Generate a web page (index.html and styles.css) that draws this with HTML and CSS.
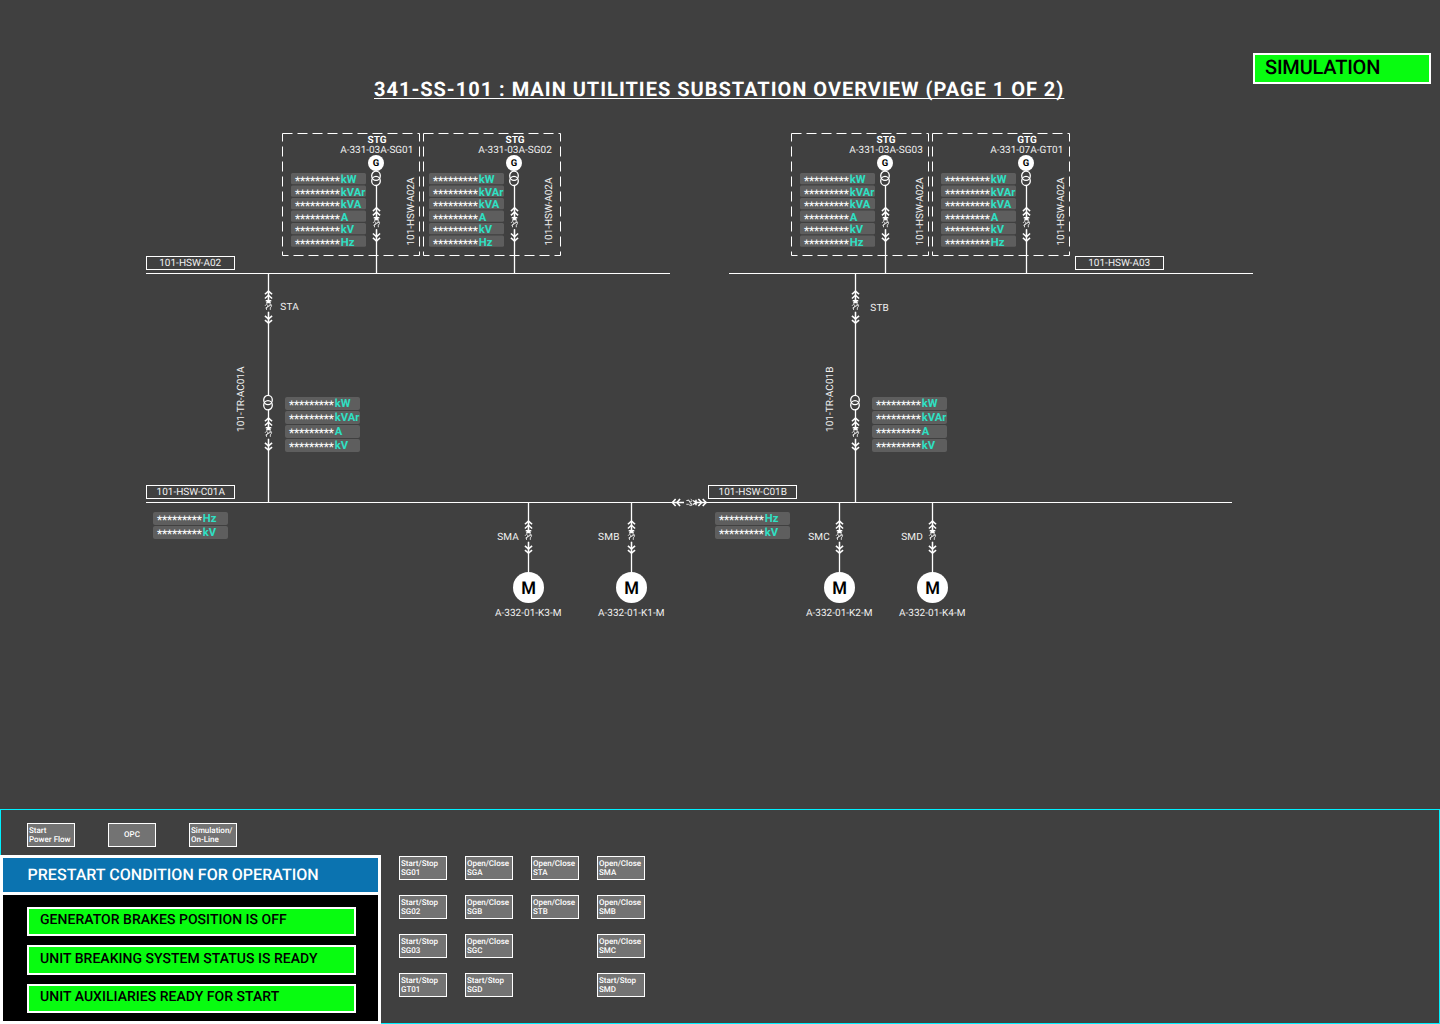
FILE: index.html
```html
<!DOCTYPE html>
<html lang="en">
<head>
<meta charset="utf-8">
<title>341-SS-101 : Main Utilities Substation Overview</title>
<link rel="stylesheet" href="styles.css">
</head>
<body>
<header class="header">
  <h1 class="title">341-SS-101 : MAIN UTILITIES SUBSTATION OVERVIEW (PAGE 1 OF 2)</h1>
  <div class="mode">SIMULATION</div>
</header>

<svg class="diagram" viewBox="0 120 1440 689" width="1440" height="689">
  <defs>
    <!-- withdrawable breaker, origin at the upper tip -->
    <g id="breaker">
      <path class="mask" d="M0 12.5V21"/>
      <path class="chev" d="M-3.6 3.6L0 .4L3.6 3.6M-3.6 7.8L0 4.6L3.6 7.8M-3.6 25.2L0 28.2L3.6 25.2M-3.6 29.4L0 32.4L3.6 29.4"/>
      <path class="spark" d="M0 8.6V11M-2.8 10L2.8 10M-2 12.8L0 10L2 12.8"/>
      <path class="squiggle" d="M-3.3 15C-2.8 13.2 -.3 13.5 -.8 15.5L-2 17.2V19.2M.5 15C1 13.2 3.5 13.5 3 15.5L1.8 17.2V19.2M-3 17.4L3 14"/>
      <path class="wire" d="M0 0V11M0 21.4V33"/>
    </g>
    <g id="transformer">
      <ellipse class="coil" cx="0" cy="-2.6" rx="4.3" ry="4.6"/>
      <ellipse class="coil" cx="0" cy="2.6" rx="4.3" ry="4.6"/>
    </g>
    <g id="stars">
      <text class="star" textLength="45">*********</text>
    </g>
    <g id="gen">
      <path class="wire" d="M.5 66V153"/>
      <circle class="node" cx="0" cy="43" r="8"/>
      <text class="g" x="0" y="46.4">G</text>
      <use href="#transformer" y="58.3"/>
      <use href="#breaker" transform="translate(.5 87.3) scale(1 1.04)"/>
      <g transform="translate(-85 53)">
        <rect class="cell" width="75" height="11.3" rx="1.5"/>
        <rect class="cell" y="12.5" width="75" height="11.3" rx="1.5"/>
        <rect class="cell" y="25" width="75" height="11.3" rx="1.5"/>
        <rect class="cell" y="37.5" width="75" height="11.3" rx="1.5"/>
        <rect class="cell" y="50" width="75" height="11.3" rx="1.5"/>
        <rect class="cell" y="62.5" width="75" height="11.3" rx="1.5"/>
        <use href="#stars" x="4" y="12"/><text class="unit" x="49.8" y="10">kW</text>
        <use href="#stars" x="4" y="24.5"/><text class="unit" x="49.8" y="22.5">kVAr</text>
        <use href="#stars" x="4" y="37"/><text class="unit" x="49.8" y="35">kVA</text>
        <use href="#stars" x="4" y="49.5"/><text class="unit" x="49.8" y="47.5">A</text>
        <use href="#stars" x="4" y="62"/><text class="unit" x="49.8" y="60">kV</text>
        <use href="#stars" x="4" y="74.5"/><text class="unit" x="49.8" y="72.5">Hz</text>
      </g>
      <text class="tag" transform="translate(38.3 125.5) rotate(-90)" textLength="68">101-HSW-A02A</text>
    </g>
    <g id="feeder">
      <path class="wire" d="M.5 274V395M.5 409V502"/>
      <use href="#breaker" x=".5" y="290.7"/>
      <use href="#transformer" y="402.6"/>
      <use href="#breaker" x=".5" y="417.7"/>
      <g transform="translate(17 397)">
        <rect class="cell" width="75" height="13" rx="2"/>
        <rect class="cell" y="14" width="75" height="13" rx="2"/>
        <rect class="cell" y="28" width="75" height="13" rx="2"/>
        <rect class="cell" y="42" width="75" height="13" rx="2"/>
        <use href="#stars" x="4" y="12.3"/><text class="unit" x="49.8" y="10.3">kW</text>
        <use href="#stars" x="4" y="26.3"/><text class="unit" x="49.8" y="24.3">kVAr</text>
        <use href="#stars" x="4" y="40.3"/><text class="unit" x="49.8" y="38.3">A</text>
        <use href="#stars" x="4" y="54.3"/><text class="unit" x="49.8" y="52.3">kV</text>
      </g>
    </g>
    <g id="busmeter">
      <rect class="cell" width="75" height="13" rx="2"/>
      <rect class="cell" y="14" width="75" height="13" rx="2"/>
      <use href="#stars" x="4" y="12.3"/><text class="unit" x="49.8" y="10.3">Hz</text>
      <use href="#stars" x="4" y="26.3"/><text class="unit" x="49.8" y="24.3">kV</text>
    </g>
    <g id="motor">
      <path class="wire" d="M0 503V573"/>
      <use href="#breaker" y="520.7"/>
      <circle class="node" cx="0" cy="587.5" r="15.5"/>
      <text class="m" transform="translate(0 594) scale(.96 1)">M</text>
    </g>
  </defs>

  <path class="bus" d="M146 273.5H670M729 273.5H1253M146 502.5H674M705 502.5H1232"/>

  <rect class="dash" x="282.5" y="133.5" width="137" height="122"/>
  <rect class="dash" x="423.5" y="133.5" width="137" height="122"/>
  <rect class="dash" x="791.5" y="133.5" width="137" height="122"/>
  <rect class="dash" x="932.5" y="133.5" width="137" height="122"/>
  <use href="#gen" x="376" y="120"/>
  <use href="#gen" x="514" y="120"/>
  <use href="#gen" x="885" y="120"/>
  <use href="#gen" x="1026" y="120"/>
  <text class="kind" x="377" y="143.4">STG</text><text class="tag" x="340.3" y="153.3" textLength="73">A-331-03A-SG01</text>
  <text class="kind" x="515" y="143.4">STG</text><text class="tag" x="478.3" y="153.3" textLength="73.5">A-331-03A-SG02</text>
  <text class="kind" x="886" y="143.4">STG</text><text class="tag" x="849.3" y="153.3" textLength="73.5">A-331-03A-SG03</text>
  <text class="kind" x="1027" y="143.4">GTG</text><text class="tag" x="990.3" y="153.3" textLength="73">A-331-07A-GT01</text>

  <rect class="box" x="146.5" y="256.5" width="88" height="13"/><text class="tag" x="159.2" y="266.4" textLength="62">101-HSW-A02</text>
  <rect class="box" x="1075.5" y="256.5" width="88" height="13"/><text class="tag" x="1088.2" y="266.4" textLength="62">101-HSW-A03</text>
  <rect class="box" x="146.5" y="485.5" width="88" height="13"/><text class="tag" x="156.5" y="495.4" textLength="68.5">101-HSW-C01A</text>
  <rect class="box" x="708.5" y="485.5" width="88" height="13"/><text class="tag" x="718.5" y="495.4" textLength="68.5">101-HSW-C01B</text>

  <use href="#feeder" x="268"/>
  <use href="#feeder" x="855"/>
  <text class="tag" x="280.3" y="310.3" textLength="18.5">STA</text>
  <text class="tag" x="870.3" y="311.3" textLength="18.5">STB</text>
  <text class="tag" transform="translate(244.3 432) rotate(-90)" textLength="65.5">101-TR-AC01A</text>
  <text class="tag" transform="translate(833.3 432) rotate(-90)" textLength="65.5">101-TR-AC01B</text>

  <use href="#breaker" transform="translate(706.5 502.5) rotate(90) scale(1 1.05)"/>
  <use href="#busmeter" x="153" y="512"/>
  <use href="#busmeter" x="715" y="512"/>

  <use href="#motor" x="528.5"/>
  <use href="#motor" x="631.5"/>
  <use href="#motor" x="839.5"/>
  <use href="#motor" x="932.5"/>
  <text class="tag" x="497.2" y="540.3" textLength="21.5">SMA</text>
  <text class="tag" x="598" y="540.3" textLength="21.5">SMB</text>
  <text class="tag" x="808.2" y="540.3" textLength="21.5">SMC</text>
  <text class="tag" x="901.2" y="540.3" textLength="21.5">SMD</text>
  <text class="tag" x="495" y="616.2" textLength="66.5">A-332-01-K3-M</text>
  <text class="tag" x="598" y="616.2" textLength="66.5">A-332-01-K1-M</text>
  <text class="tag" x="806" y="616.2" textLength="66.5">A-332-01-K2-M</text>
  <text class="tag" x="899" y="616.2" textLength="66.5">A-332-01-K4-M</text>
</svg>

<footer class="console">
  <section class="left">
    <div class="toolbar">
      <button class="btn">Start<br>Power Flow</button>
      <button class="btn center">OPC</button>
      <button class="btn">Simulation/<br>On-Line</button>
    </div>
    <div class="prestart">
      <h2 class="prestart-title">PRESTART CONDITION FOR OPERATION</h2>
      <div class="conditions">
        <div class="cond">GENERATOR BRAKES POSITION IS OFF</div>
        <div class="cond tall">UNIT BREAKING SYSTEM STATUS IS READY</div>
        <div class="cond">UNIT AUXILIARIES READY FOR START</div>
      </div>
    </div>
  </section>
  <section class="controls">
    <button class="btn">Start/Stop<br>SG01</button>
    <button class="btn">Open/Close<br>SGA</button>
    <button class="btn">Open/Close<br>STA</button>
    <button class="btn">Open/Close<br>SMA</button>
    <button class="btn">Start/Stop<br>SG02</button>
    <button class="btn">Open/Close<br>SGB</button>
    <button class="btn">Open/Close<br>STB</button>
    <button class="btn">Open/Close<br>SMB</button>
    <button class="btn">Start/Stop<br>SG03</button>
    <button class="btn">Open/Close<br>SGC</button>
    <button class="btn last">Open/Close<br>SMC</button>
    <button class="btn">Start/Stop<br>GT01</button>
    <button class="btn">Start/Stop<br>SGD</button>
    <button class="btn last">Start/Stop<br>SMD</button>
  </section>
</footer>
</body>
</html>
```
FILE: styles.css
```css
* { box-sizing: border-box; }
body {
  margin: 0;
  width: 1440px;
  height: 1024px;
  overflow: hidden;
  background: #404040;
  color: #fff;
  font-family: Roboto, "Liberation Sans", sans-serif;
  text-rendering: geometricPrecision;
}

.header {
  height: 120px;
  display: grid;
  grid-template-columns: 374px 1fr 178px;
  align-items: start;
  padding-right: 9px;
}
.title {
  grid-column: 2;
  margin: 77px 0 0;
  font-size: 20px;
  line-height: 24px;
  font-weight: 700;
  letter-spacing: .99px;
  white-space: nowrap;
  text-decoration: underline;
  text-decoration-thickness: 1px;
  text-underline-offset: 2px;
  text-decoration-skip-ink: none;
}
.mode {
  margin-top: 53px;
  height: 31px;
  border: 2px solid #fff;
  background: #08fc10;
  color: #000;
  padding-left: 10px;
  font-size: 20px;
  line-height: 24px;
  font-weight: 500;
  letter-spacing: -.2px;
}

.diagram { display: block; }
.diagram text { text-rendering: geometricPrecision; }
.wire { stroke: #fff; stroke-width: 1.3; fill: none; }
.bus { stroke: #fff; stroke-width: 1; fill: none; }
.mask { stroke: #404040; stroke-width: 3; }
.chev { stroke: #fff; stroke-width: 1.5; fill: none; }
.spark { stroke: #fff; stroke-width: 1.4; fill: none; }
.squiggle { stroke: #e8e8e8; stroke-width: .9; fill: none; }
.coil { stroke: #fff; stroke-width: 1.3; fill: none; }
.node { fill: #fff; }
.dash { fill: none; stroke: #fff; stroke-width: 1; stroke-dasharray: 10 5; }
.box { fill: none; stroke: #fff; stroke-width: 1; }
.cell { fill: #5e5e5e; }
.tag { fill: #f0f0f0; font-size: 10px; }
.kind { fill: #fff; font-size: 10px; font-weight: 700; text-anchor: middle; }
.g { fill: #000; font-size: 9.5px; font-weight: 700; text-anchor: middle; }
.m { fill: #000; font-size: 17.5px; font-weight: 600; text-anchor: middle; }
.star { fill: #fff; font-size: 12px; font-weight: 400; }
.unit { fill: #2fe0c4; font-size: 11.2px; font-weight: 700; }

.console {
  height: 215px;
  display: flex;
  border: 1px solid #00f0ff;
}
.left { width: 380px; margin-left: -1px; }
.toolbar {
  display: flex;
  gap: 33px;
  height: 45px;
  padding: 13px 0 0 27px;
}
.btn {
  width: 48px;
  height: 24px;
  margin: 0;
  padding: 0 0 0 1px;
  border: 1px solid #fff;
  border-radius: 0;
  background: #737373;
  color: #fff;
  font-family: inherit;
  font-size: 8px;
  line-height: 9px;
  font-weight: 500;
  text-align: left;
  text-rendering: inherit;
  white-space: nowrap;
}
.btn.center { text-align: center; padding: 0 0 2px; }
.prestart {
  position: relative;
  width: 381px;
  height: 169px;
  border: 3px solid #fff;
  background: #000;
}
.prestart-title {
  margin: 0;
  height: 37px;
  padding-left: 24.5px;
  border-bottom: 3px solid #fff;
  background: #0b73b0;
  font-size: 16px;
  line-height: 34px;
  font-weight: 500;
  letter-spacing: .03px;
}
.conditions {
  display: flex;
  flex-direction: column;
  gap: 9px;
  padding: 12px 22px 0 24px;
}
.cond {
  height: 29px;
  padding-left: 11px;
  border: 2px solid #fff;
  background: #08fc10;
  color: #000;
  font-size: 14px;
  line-height: 23px;
  font-weight: 500;
  letter-spacing: .03px;
}
.cond.tall { height: 30px; line-height: 24px; }
.controls {
  display: grid;
  grid-template-columns: repeat(4, 48px);
  grid-auto-rows: 24px;
  gap: 15px 18px;
  padding: 46px 0 0 19px;
}
.last { grid-column: 4; }
```
